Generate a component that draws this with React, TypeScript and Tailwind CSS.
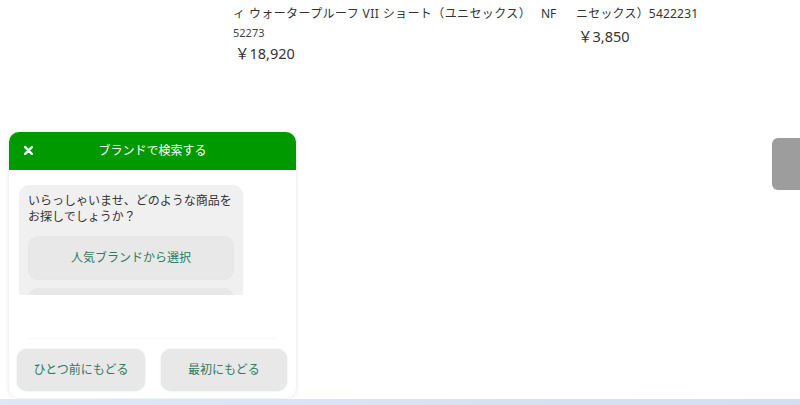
import React from "react";

const jp = { fontFamily: '"Noto Sans", "Noto Sans CJK JP", sans-serif' };

export default function App() {
  return (
    <div className="relative flex h-[405px] w-[800px] flex-col overflow-hidden bg-white" style={jp}>
      {/* product text strip */}
      <div className="flex h-[132px] pl-[233px] text-[#333]">
        <div className="flex w-[300px] flex-col">
          <div className="mt-[5px] h-[18px] whitespace-nowrap text-[12px] leading-[18px] tracking-[0.4px]">ィ ウォータープルーフ VII ショート（ユニセックス）</div>
          <div className="mt-[1px] h-[18px] text-[11px] leading-[18px] text-[#444]">52273</div>
          <div className="mt-[1px] pl-[2px] text-[14.5px] leading-[20px]">￥18,920</div>
        </div>
        <div className="ml-[8px] flex flex-col">
          <div className="mt-[5px] flex h-[18px] whitespace-nowrap text-[12px] leading-[18px]">
            <span className="w-[35px]">NF</span>
            <span className="tracking-[0.2px]">ニセックス）5422231</span>
          </div>
          <div className="mt-[3px] pl-[37px] text-[14.5px] leading-[20px]">￥3,850</div>
        </div>
      </div>

      {/* right scroll tab */}
      <div className="absolute right-0 top-[138px] h-[52px] w-[28px] rounded-l-[6px] bg-[#9d9d9d]" />

      {/* chat panel */}
      <div className="ml-[9px] flex h-[266px] w-[287px] flex-col rounded-[10px] bg-white shadow-[0_0_4px_rgba(0,0,0,0.12)]">
        <div className="relative flex h-[38px] items-center justify-center rounded-t-[10px] bg-[#009a00] text-[12px] text-white">
          <svg className="absolute left-[15px] top-[14px]" width="9" height="9" viewBox="0 0 9 9">
            <path d="M1.2 1.2 L7.8 7.8 M7.8 1.2 L1.2 7.8" stroke="white" strokeWidth="2.4" strokeLinecap="round" />
          </svg>
          <span>ブランドで検索する</span>
        </div>
        <div className="h-[125px] overflow-hidden pl-[10px] pt-[15px]">
          <div className="w-[224px] rounded-[10px] bg-[#f0f0f0] px-[9px] pb-[9px] pt-[8px]">
            <p className="whitespace-nowrap text-[12px] leading-[16px] text-[#333]">いらっしゃいませ、どのような商品を<br />お探しでしょうか？</p>
            <div className="mt-[11px] flex h-[44px] w-[206px] items-center justify-center rounded-[10px] border border-[#e2e8e6] bg-[#e8e8e8] text-[12px] text-[#2e7a63]">人気ブランドから選択</div>
            <div className="mt-[8px] h-[44px] w-[206px] rounded-[10px] border border-[#e2e8e6] bg-[#e8e8e8]" />
          </div>
        </div>
        <div className="mx-[20px] mt-[43px] h-px bg-[#f7f9f9]" />
        <div className="mt-[10px] flex gap-[16px] pl-[8px]">
          <div className="flex h-[42px] w-[128px] items-center justify-center rounded-[10px] bg-[#e8e8e8] text-[12px] text-[#2e7a63] shadow-[0_0_2px_rgba(180,210,200,0.6)]">ひとつ前にもどる</div>
          <div className="flex h-[42px] w-[126px] items-center justify-center rounded-[10px] bg-[#e8e8e8] text-[12px] text-[#2e7a63] shadow-[0_0_2px_rgba(180,210,200,0.6)]">最初にもどる</div>
        </div>
      </div>

      <div className="mt-[1px] h-[6px] w-full bg-gradient-to-r from-[#dfe8f4] via-[#d9e3f5] to-[#d3ddf4]" />
    </div>
  );
}
